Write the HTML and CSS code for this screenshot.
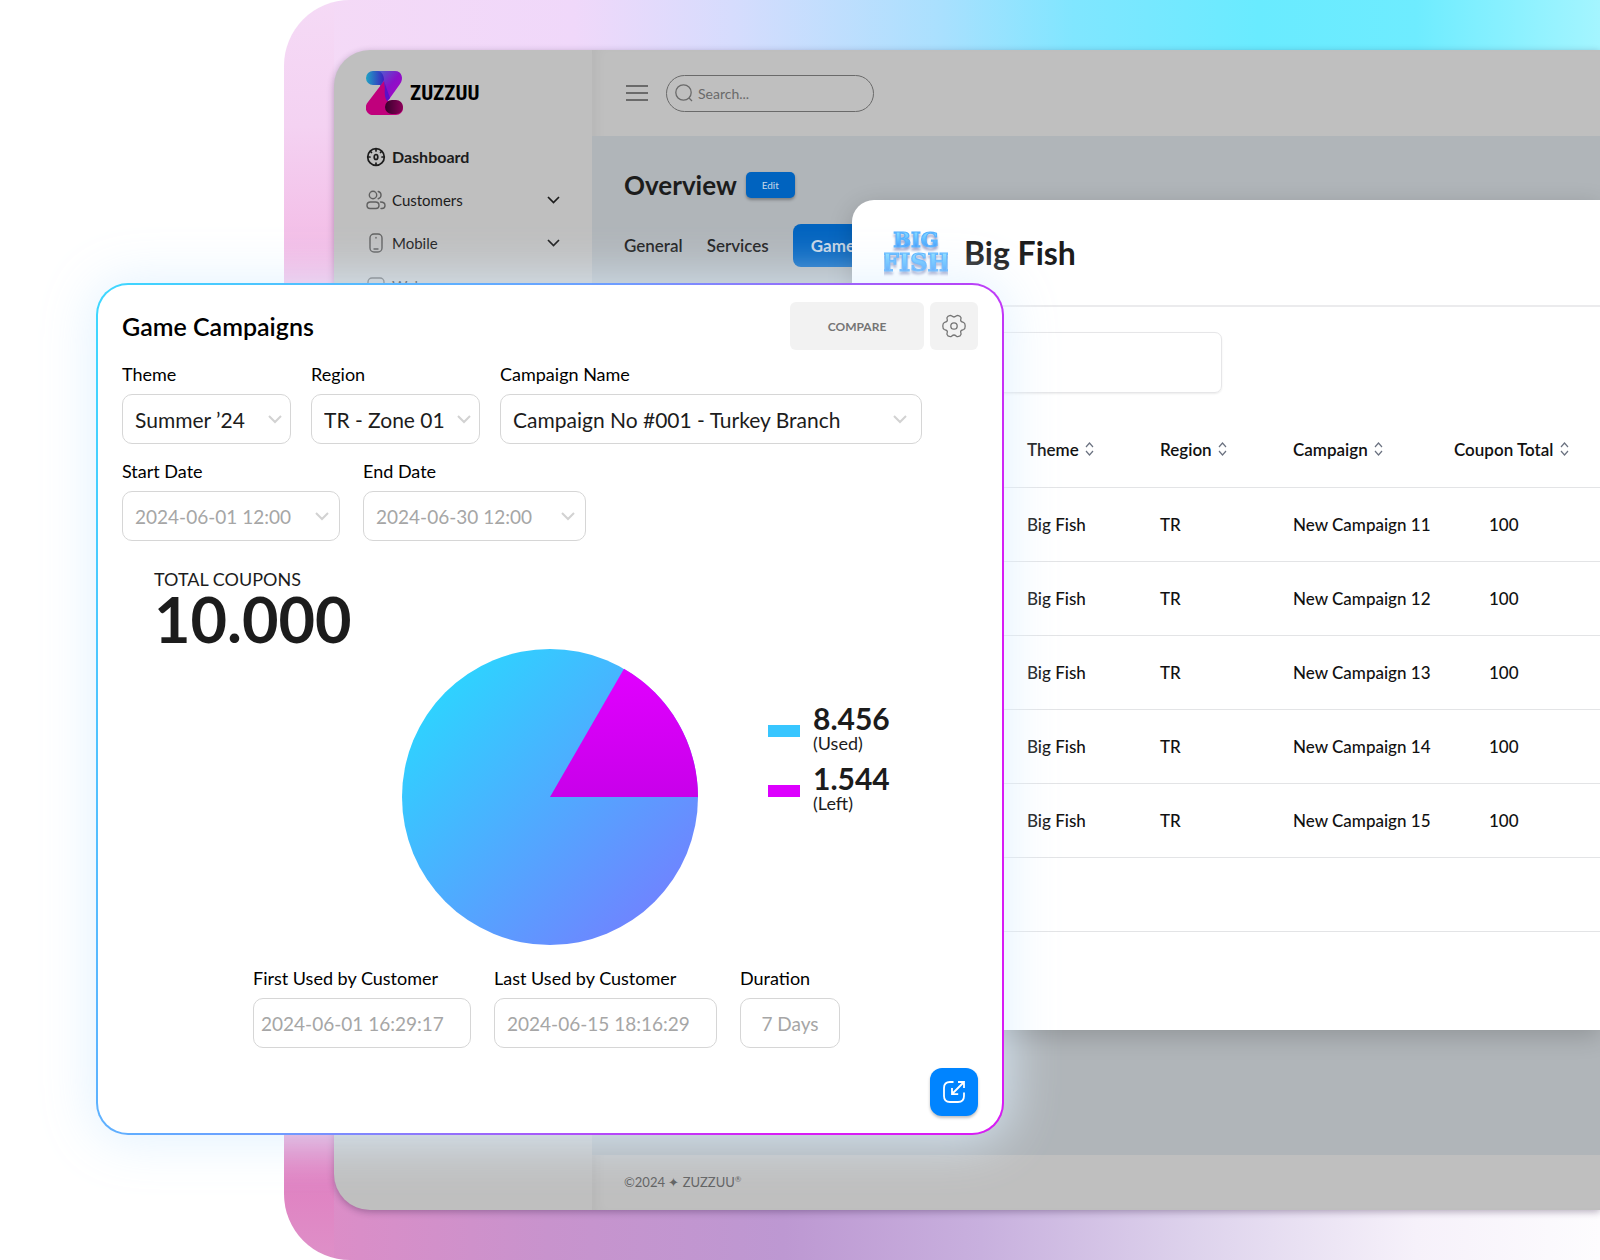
FILE: index.html
```html
<!DOCTYPE html>
<html lang="en">
<head>
<meta charset="utf-8">
<meta name="viewport" content="width=device-width, initial-scale=1">
<title>Zuzzuu – Game Campaigns</title>
<link rel="stylesheet" href="styles.css">
</head>
<body>
<div class="stage">
  <div class="backdrop">
    <div class="app">
      <aside class="sidebar">
        <a class="brand" href="#">
          <svg width="38" height="44" viewBox="0 0 38 44" aria-hidden="true">
            <defs>
              <linearGradient id="z1" x1="0" y1="0" x2="1" y2="0"><stop offset="0" stop-color="#1fa3c4"/><stop offset="1" stop-color="#3a22c0"/></linearGradient>
              <linearGradient id="z2" x1="0" y1="0" x2="1" y2="1"><stop offset="0" stop-color="#3f74d0"/><stop offset=".5" stop-color="#8a10c8"/><stop offset="1" stop-color="#b400c4"/></linearGradient>
              <linearGradient id="z3" x1="0" y1="0" x2="1" y2="0"><stop offset="0" stop-color="#38002c"/><stop offset="1" stop-color="#8a0058"/></linearGradient>
            </defs>
            <path d="M8 0H29c7 0 9 8 5 13L19 34 14 14Z" fill="url(#z2)"/>
            <path d="M7 0h4c5 0 7 5 7 9l-3 5H7A7 7 0 0 1 7 0Z" fill="url(#z1)"/>
            <path d="M18 10 2 31c-5 6-1 13 5 13h23a7 7 0 0 0 0-14h-9Z" fill="#c0007c"/>
            <path d="M18 10c2 8-1 14 3 20l3-3Z" fill="#5a10c8"/>
            <rect x="19" y="29" width="18" height="14" rx="7" fill="url(#z3)"/>
          </svg>
          <span>ZUZZUU</span>
        </a>
        <nav class="menu">
          <a class="menu-item is-active" href="#">
            <svg class="ico" width="20" height="20" viewBox="0 0 20 20"><circle cx="10" cy="10" r="8.3"/><ellipse cx="10" cy="10" rx="1.8" ry="2.5"/><path d="M10 2v2M10 16v2M2 10h2M16 10h2M4.500 4.500l1 1M15.500 4.500l-1 1"/></svg>
            Dashboard
          </a>
          <a class="menu-item" href="#">
            <svg class="ico" width="20" height="20" viewBox="0 0 20 20"><circle cx="7" cy="5" r="3.700"/><path d="M12.200 1.500a3.700 3.700 0 0 1 0 7.200"/><path d="M1 15.500c0-2.500 1.500-3.500 3.500-3.500h5c2 0 3.500 1 3.500 3.500 0 2-1 3-3 3H4c-2 0-3-1-3-3ZM14.500 12c3 0 4.500 1.500 4.500 3.500s-1 3-3 3h-1"/></svg>
            Customers
            <svg class="caret" width="13" height="8" viewBox="0 0 13 8"><path d="M1 1l5.500 5.500L12 1"/></svg>
          </a>
          <a class="menu-item" href="#">
            <svg class="ico" width="20" height="20" viewBox="0 0 20 20"><rect x="4" y="1" width="12" height="18" rx="4"/><path d="M8 16h4M10 4.500v.6"/></svg>
            Mobile
            <svg class="caret" width="13" height="8" viewBox="0 0 13 8"><path d="M1 1l5.500 5.500L12 1"/></svg>
          </a>
          <a class="menu-item" href="#">
            <svg class="ico" width="20" height="20" viewBox="0 0 20 20"><rect x="2" y="2" width="16" height="14" rx="4"/></svg>
            Web
          </a>
        </nav>
      </aside>
      <div class="workspace">
        <header class="topbar">
          <button class="burger" type="button" aria-label="Menu"><svg width="22" height="16" viewBox="0 0 22 16"><path d="M0 1h22M0 8h22M0 15h22"/></svg></button>
          <label class="search">
            <svg width="18" height="18" viewBox="0 0 18 18"><circle cx="8.500" cy="8.500" r="7.700"/><path d="M14 14l3 3"/></svg>
            <input type="search" placeholder="Search..." aria-label="Search">
          </label>
        </header>
        <main class="overview">
          <div class="overview-head"><h1>Overview</h1><button class="edit" type="button">Edit</button></div>
          <nav class="tabs"><a href="#">General</a><a href="#">Services</a><a class="is-active" href="#">Games</a></nav>
        </main>
        <footer class="footer">©2024 ✦ ZUZZUU<sup>®</sup></footer>
      </div>
    </div>
  </div>

  <section class="dialog">
    <header class="dialog-head">
      <svg width="64" height="50" viewBox="0 0 64 50" role="img" aria-label="Big Fish">
        <defs><linearGradient id="bf" x1="0" y1="0" x2="0" y2="1"><stop offset="0.200" stop-color="#86dcff"/><stop offset=".6" stop-color="#55b4ff"/><stop offset="1" stop-color="#2f78f5"/></linearGradient></defs>
        <g class="bigfish" text-anchor="middle">
          <text x="32" y="19" font-size="21">BIG</text>
          <text x="32" y="43" font-size="24">FISH</text>
        </g>
      </svg>
      <h2>Big Fish</h2>
    </header>
    <input class="filter" type="text" aria-label="Filter">
    <table class="grid">
      <colgroup><col class="c-lead"><col class="c-mid"><col class="c-mid"><col class="c-wide"><col></colgroup>
      <thead>
        <tr><th></th>
          <th>Theme <svg class="sort" width="9" height="14" viewBox="0 0 9 14"><path d="M1 5l3.500-4L8 5M1 9l3.500 4L8 9"/></svg></th>
          <th>Region <svg class="sort" width="9" height="14" viewBox="0 0 9 14"><path d="M1 5l3.500-4L8 5M1 9l3.500 4L8 9"/></svg></th>
          <th>Campaign <svg class="sort" width="9" height="14" viewBox="0 0 9 14"><path d="M1 5l3.500-4L8 5M1 9l3.500 4L8 9"/></svg></th>
          <th>Coupon Total <svg class="sort" width="9" height="14" viewBox="0 0 9 14"><path d="M1 5l3.500-4L8 5M1 9l3.500 4L8 9"/></svg></th></tr>
      </thead>
      <tbody>
        <tr><td></td><td>Big Fish</td><td>TR</td><td>New Campaign 11</td><td class="num">100</td></tr>
        <tr><td></td><td>Big Fish</td><td>TR</td><td>New Campaign 12</td><td class="num">100</td></tr>
        <tr><td></td><td>Big Fish</td><td>TR</td><td>New Campaign 13</td><td class="num">100</td></tr>
        <tr><td></td><td>Big Fish</td><td>TR</td><td>New Campaign 14</td><td class="num">100</td></tr>
        <tr><td></td><td>Big Fish</td><td>TR</td><td>New Campaign 15</td><td class="num">100</td></tr>
        <tr><td></td><td></td><td></td><td></td><td></td></tr>
      </tbody>
    </table>
  </section>

  <section class="card">
    <header class="card-head">
      <h2>Game Campaigns</h2>
      <button class="compare" type="button">COMPARE</button>
      <button class="gear" type="button" aria-label="Settings">
        <svg width="24" height="24" viewBox="0 0 24 24"><circle cx="12" cy="12" r="3.200"/><path d="M8.300 1.300C9.800 1.300 10 3 12 3s2.200-1.700 3.700-1.700c1.500.2 3 1.100 3.300 2.400.3 1.200-.8 1.900-.2 3.200.7 1.300 1.700 1.100 2.900 1.600 1.100.6 1.500 2.100 1.500 3.500s-.4 2.900-1.500 3.500c-1.200.5-2.200.3-2.900 1.600-.6 1.300.5 2 .2 3.200-.3 1.300-1.800 2.200-3.300 2.400-1.500 0-1.700-1.700-3.700-1.700s-2.200 1.700-3.700 1.700c-1.500-.2-3-1.100-3.300-2.400-.3-1.200.8-1.900.2-3.200-.7-1.300-1.700-1.100-2.900-1.600C1.200 14.900.8 13.400.8 12s.4-2.900 1.500-3.500c1.200-.5 2.200-.3 2.900-1.600.6-1.300-.5-2-.2-3.200.3-1.300 1.800-2.200 3.300-2.400Z"/></svg>
      </button>
    </header>

    <div class="fields">
      <div class="field w-s"><label for="theme">Theme</label>
        <div class="select"><select id="theme"><option>Summer ’24</option></select><svg width="14" height="9" viewBox="0 0 14 9"><path d="M1 1l6 6 6-6"/></svg></div></div>
      <div class="field w-s"><label for="region">Region</label>
        <div class="select"><select id="region"><option>TR - Zone 01</option></select><svg width="14" height="9" viewBox="0 0 14 9"><path d="M1 1l6 6 6-6"/></svg></div></div>
      <div class="field w-l"><label for="campaign">Campaign Name</label>
        <div class="select"><select id="campaign"><option>Campaign No #001 - Turkey Branch</option></select><svg width="14" height="9" viewBox="0 0 14 9"><path d="M1 1l6 6 6-6"/></svg></div></div>
    </div>
    <div class="fields dates">
      <div class="field w-m"><label for="start">Start Date</label>
        <div class="select"><select id="start"><option>2024-06-01 12:00</option></select><svg width="14" height="9" viewBox="0 0 14 9"><path d="M1 1l6 6 6-6"/></svg></div></div>
      <div class="field w-m2"><label for="end">End Date</label>
        <div class="select"><select id="end"><option>2024-06-30 12:00</option></select><svg width="14" height="9" viewBox="0 0 14 9"><path d="M1 1l6 6 6-6"/></svg></div></div>
    </div>

    <div class="total"><span>TOTAL COUPONS</span><strong>10.000</strong></div>

    <div class="chart">
      <svg class="pie" width="296" height="296" viewBox="0 0 296 296" role="img" aria-label="8.456 used, 1.544 left">
        <defs>
          <linearGradient id="used" x1=".1" y1=".15" x2=".85" y2=".9"><stop offset="0" stop-color="#2dd4ff"/><stop offset="1" stop-color="#7083ff"/></linearGradient>
          <linearGradient id="left" x1="0" y1="0" x2="0" y2="1"><stop offset="0" stop-color="#e100ff"/><stop offset="1" stop-color="#c800ea"/></linearGradient>
        </defs>
        <circle cx="148" cy="148" r="148" fill="url(#used)"/>
        <path d="M148 148L222 19.800A148 148 0 0 1 296 148Z" fill="url(#left)"/>
      </svg>
      <ul class="legend">
        <li><i class="swatch used"></i><div><b>8.456</b><span>(Used)</span></div></li>
        <li><i class="swatch left"></i><div><b>1.544</b><span>(Left)</span></div></li>
      </ul>
    </div>

    <div class="fields usage">
      <div class="field w-m"><label for="first">First Used by Customer</label><input id="first" class="tight" type="text" value="2024-06-01 16:29:17" readonly></div>
      <div class="field w-m2"><label for="last">Last Used by Customer</label><input id="last" type="text" value="2024-06-15 18:16:29" readonly></div>
      <div class="field w-xs"><label for="duration">Duration</label><input id="duration" class="centered" type="text" value="7 Days" readonly></div>
    </div>

    <footer class="card-foot">
      <button class="open" type="button" aria-label="Open">
        <svg width="24" height="24" viewBox="0 0 24 24"><path d="M11.500 2H8C4 2 2 4 2 8v8c0 4 2 6 6 6h8c4 0 6-2 6-6v-3.500M22 2 10 14M10 8v6.200h6.200M16 2h6v6"/></svg>
      </button>
    </footer>
  </section>
</div>
</body>
</html>
```
FILE: styles.css
```css
* { box-sizing: border-box; }

body {
  margin: 0;
  background: #fff;
  color: #1c1c1c;
  font-family: Lato, "Open Sans", sans-serif;
  font-size: 17px;
}

h1, h2 { margin: 0; font-weight: 700; }
a { color: inherit; text-decoration: none; }
button, input, select { font: inherit; color: inherit; }
button { border: 0; padding: 0; cursor: pointer; }
svg { display: block; flex: none; fill: none; }

.stage {
  position: relative;
  min-height: 100vh;
  overflow: hidden;
}

/* Colourful frame behind the application */
.backdrop {
  display: flex;
  min-height: 100vh;
  margin-left: 284px;
  padding: 50px 0 50px 50px;
  border-radius: 66px 0 0 66px;
  background:
    linear-gradient(#f5daf6, #f4d2f2 10%, #f3b8e4 22%, #eda0d6 60%, #e082c2 94%, #de90c8) left / 50px 100% no-repeat,
    linear-gradient(to right, #f5daf6, #f0d8fa 22%, #d6dcfd 34%, #a9e0fe 50%, #80e6ff 60%, #69ebff 74%, #6eecff 86%, #a4f5ff) top / 100% 50% no-repeat,
    linear-gradient(to right, #e08cc6, #c893cd 20%, #bd98d2 38%, #c8b0de 53%, #ddd2ec 69%, #f6f1fa 86%, #fdfcfe) bottom / 100% 50% no-repeat;
}

.app {
  flex: 1;
  display: grid;
  grid-template-columns: 258px 1fr;
  background: #bfbfbf;
  border-radius: 36px 0 0 36px;
  box-shadow: 0 2px 7px rgba(40, 20, 60, .32);
}

.sidebar { padding: 21px 32px 0 32px; }

.brand {
  display: flex;
  align-items: center;
  gap: 6px;
  color: #000;
  font: bold 21px/44px "Liberation Sans Narrow", "Roboto Condensed", "Open Sans Condensed", Roboto, sans-serif;
}

.menu { margin-top: 20px; }
.menu-item {
  display: flex;
  align-items: center;
  gap: 6px;
  height: 43px;
  font-size: 15px;
}
.menu-item.is-active { font-size: 16px; font-weight: 700; }
.ico { stroke: #606060; stroke-width: 1.4; stroke-linecap: round; }
.is-active .ico { stroke: #1c1c1c; stroke-width: 1.7; }
.caret { margin-left: auto; stroke: #1c1c1c; stroke-width: 1.7; }

.workspace {
  display: flex;
  flex-direction: column;
  box-shadow: inset 10px 0 14px -8px rgba(0, 0, 0, .06);
}

.topbar {
  display: flex;
  align-items: center;
  gap: 18px;
  height: 86px;
  padding-left: 34px;
}
.burger { background: none; }
.burger svg { stroke: #6a6a6a; stroke-width: 2; }
.search {
  display: flex;
  align-items: center;
  gap: 5px;
  width: 208px;
  height: 37px;
  padding: 0 8px;
  border: 1px solid #6a6a6a;
  border-radius: 19px;
}
.search svg { stroke: #6a6a6a; stroke-width: 1.3; }
.search input {
  min-width: 0;
  padding: 0;
  border: 0;
  outline: 0;
  background: none;
  font-size: 14px;
}
.search input::placeholder { color: #6a6a6a; }

.overview {
  flex: 1;
  padding: 31px 32px 0;
  background: #b0b5b9;
}
.overview-head { display: flex; align-items: center; gap: 9px; }
.overview h1 { font-size: 26px; line-height: 36px; }
.edit {
  width: 49px;
  height: 26px;
  border-radius: 5px;
  background: #0063bf;
  color: #c8d8e8;
  font-size: 10px;
  box-shadow: 0 2px 3px rgba(0, 0, 0, .3);
}
.tabs {
  display: flex;
  align-items: center;
  gap: 24px;
  margin-top: 21px;
  font-size: 17px;
  font-weight: 600;
}
.tabs .is-active {
  padding: 0 18px;
  border-radius: 8px;
  background: #0063bf;
  color: #c4d4e4;
  font-weight: 700;
  line-height: 43px;
}

.footer {
  height: 55px;
  padding-left: 32px;
  color: #606060;
  font-size: 13px;
  line-height: 55px;
}
.footer sup { font-size: 8px; line-height: 1; }

/* Big Fish window */
.dialog {
  position: absolute;
  top: 200px;
  left: 852px;
  right: 0;
  padding-bottom: 98px;
  border-radius: 22px 0 0 22px;
  background: #fff;
  box-shadow: 0 6px 24px rgba(0, 0, 0, .18);
  color: #111;
}
.dialog-head {
  display: flex;
  align-items: center;
  gap: 16px;
  height: 107px;
  padding-left: 32px;
  border-bottom: 2px solid #ebebed;
}
.dialog-head h2 { font-size: 32px; line-height: 40px; color: #1c1c1c; }
.bigfish {
  fill: url(#bf);
  stroke: #55b0ff;
  stroke-width: 1.2;
  font-family: "DejaVu Serif", serif;
  font-weight: 700;
  filter: drop-shadow(0 3px 1px rgba(50, 60, 140, .45));
}
.filter {
  display: block;
  width: 338px;
  height: 61px;
  margin: 25px 0 20px 32px;
  border: 1px solid #e6e6e8;
  border-radius: 7px;
  background: transparent;
  box-shadow: 0 1px 2px rgba(0, 0, 0, .08);
}
.grid {
  width: 100%;
  border-collapse: collapse;
  table-layout: fixed;
  text-align: left;
  white-space: nowrap;
}
.c-lead { width: 175px; }
.c-mid { width: 133px; }
.c-wide { width: 161px; }
.grid th, .grid td {
  height: 74px;
  padding: 0;
  border-bottom: 1px solid #e3e4e6;
  font-weight: 500;
}
.grid th { font-weight: 600; }
.grid .num { padding-left: 35px; }
.sort { display: inline-block; margin-left: 2px; stroke: #6b7280; stroke-width: 1.2; }

/* Game Campaigns card */
.card {
  position: absolute;
  top: 283px;
  left: 96px;
  width: 908px;
  padding: 17px 24px;
  border: 2px solid transparent;
  border-radius: 32px;
  background:
    linear-gradient(#fff, #fff) padding-box,
    linear-gradient(112deg, #3dd8ff, #6f9cff 42%, #d81cf5 82%) border-box;
  box-shadow: 0 2px 52px 4px rgba(222, 240, 255, .85);
}
.card-head {
  display: flex;
  align-items: center;
  gap: 6px;
}
.card-head h2 {
  flex: 1;
  color: #000;
  font-size: 25px;
  font-weight: 600;
  line-height: 28px;
}
.compare, .gear {
  width: 48px;
  height: 48px;
  border-radius: 6px;
  background: #f2f2f2;
  color: #757575;
}
.compare { width: 134px; font-size: 12px; font-weight: 700; }
.gear svg, .open svg { margin: auto; stroke: #757575; stroke-width: 1.3; }

.fields { display: flex; gap: 20px; margin-top: 13px; }
.dates { margin-top: 16px; gap: 23px; }
.usage { margin-top: 22px; padding-left: 131px; gap: 23px; }
.field label {
  display: block;
  margin-bottom: 9px;
  color: #000;
  font-size: 18px;
  line-height: 22px;
}
.w-xs { width: 100px; }
.w-s { width: 169px; }
.w-m { width: 218px; }
.w-m2 { width: 223px; }
.w-l { width: 422px; }
.field select, .field input {
  display: block;
  width: 100%;
  height: 50px;
  padding: 0 12px;
  border: 1px solid #d6d6d6;
  border-radius: 10px;
  background: #fff;
  font-size: 21px;
  appearance: none;
}
.dates select, .usage input { color: #a6a6a6; font-size: 19px; }
.field .tight { padding: 0 7px; }
.field .centered { padding: 0; text-align: center; }
.select { position: relative; }
.select svg {
  position: absolute;
  top: 21px;
  right: 9px;
  stroke: #d2d2d2;
  stroke-width: 2;
  pointer-events: none;
}
.dates .select svg { right: 11px; }
.w-l .select svg { right: 15px; }

.total {
  display: grid;
  margin: 26px 0 0 32px;
  font-size: 18px;
  line-height: 24px;
}
.total strong { font-size: 63px; line-height: 56px; }

.chart {
  display: grid;
  grid-template-columns: 1fr auto 1fr;
  margin-top: 2px;
}
.pie { grid-column: 2; }
.legend {
  margin: 0;
  padding: 54px 0 0 70px;
  list-style: none;
  font-size: 18px;
}
.legend li { display: flex; align-items: center; gap: 13px; margin-bottom: 10px; }
.legend b, .legend span { display: block; line-height: 20px; }
.legend b { font-size: 30px; font-weight: 700; line-height: 30px; }
.swatch { width: 32px; height: 12px; margin-top: 6px; }
.swatch.used { background: #38c6ff; }
.swatch.left { background: #dd00ff; }

.card-foot { display: flex; justify-content: flex-end; margin-top: 20px; }
.open {
  width: 48px;
  height: 48px;
  border-radius: 12px;
  background: #0084ff;
  box-shadow: 0 2px 3px rgba(0, 0, 0, .25);
}
.open svg { stroke: #fff; stroke-width: 1.8; }
```
